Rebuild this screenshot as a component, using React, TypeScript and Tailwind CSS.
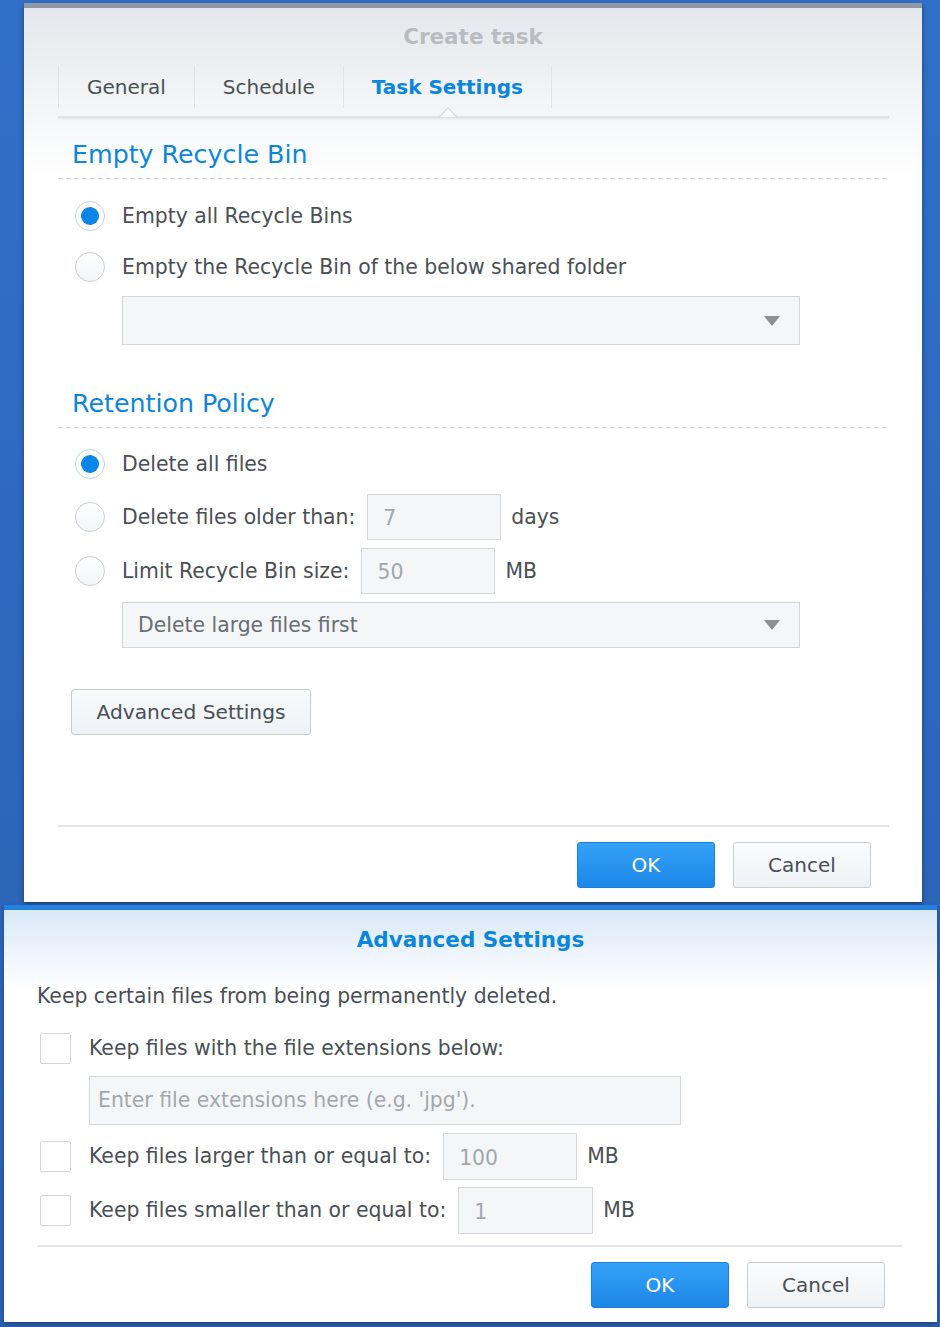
import React from "react";

function Radio({ checked, label }: { checked?: boolean; label: string }) {
  return (
    <div className="flex h-[34px] items-center">
      <span
        className={
          checked
            ? "ml-[17px] flex h-[30px] w-[30px] items-center justify-center rounded-full border-[1.5px] border-[#bfd0e0] bg-white"
            : "ml-[17px] h-[30px] w-[30px] rounded-full border-[1.5px] border-[#cbd0d5] bg-[linear-gradient(to_bottom,#ffffff,#f3f5f7)]"
        }
      >
        {checked && <span className="h-[18px] w-[18px] rounded-full bg-[#0a85e8]" />}
      </span>
      <span className="ml-[17px] text-[20.4px] text-[#4a4f55]">{label}</span>
    </div>
  );
}

function Checkbox() {
  return <span className="h-[31px] w-[31px] shrink-0 rounded-[2px] border border-[#d3d7db] bg-white" />;
}

function Field({ value, width }: { value: string; width: string }) {
  return (
    <div className={`${width} flex h-full items-center border border-[#d5d9dd] bg-[#f4f6f8] pl-[15px] pt-[3px] text-[20.4px] text-[#a2a7ad]`}>
      {value}
    </div>
  );
}

function Arrow() {
  return (
    <svg width="16" height="10" viewBox="0 0 16 10">
      <path d="M0 0 L16 0 L8 10 Z" fill="#8a8f96" />
    </svg>
  );
}

function SectionTitle({ children }: { children: React.ReactNode }) {
  return (
    <div>
      <div className="flex h-[34px] items-center pl-[14px] text-[25.3px] text-[#0b86de]">{children}</div>
      <div className="mt-[6px] h-px bg-[repeating-linear-gradient(to_right,#d2d6da_0_5px,transparent_5px_8px)]" />
    </div>
  );
}

function Buttons() {
  return (
    <div className="flex justify-end gap-[18px]">
      <button className="h-[46px] w-[138px] rounded-[3px] border border-[#1b80da] bg-[linear-gradient(to_bottom,#35a2f8,#1c86e6)] text-[20px] text-white">
        OK
      </button>
      <button className="h-[46px] w-[138px] rounded-[3px] border border-[#c8cdd2] bg-[linear-gradient(to_bottom,#fbfcfd,#eef1f4)] text-[20px] text-[#4a4f55]">
        Cancel
      </button>
    </div>
  );
}

export default function App() {
  return (
    <div className="h-[1327px] w-[940px] overflow-hidden bg-[linear-gradient(to_bottom,#3170c9,#2a5fb0)] pt-[3px] font-['DejaVu_Sans','Verdana',sans-serif]">
      {/* Create task dialog */}
      <div className="ml-[24px] flex h-[899px] w-[898px] flex-col border-t-[5px] border-[#8e99a5] bg-[linear-gradient(to_bottom,#e4e8ec_0px,#ffffff_170px)] shadow-[0_2px_5px_rgba(0,0,0,0.4)]">
        <div className="flex h-[58px] items-center justify-center text-[21.5px] font-bold text-[#b8bcc2]">Create task</div>

        <div className="flex flex-1 flex-col pl-[34px] pr-[33px]">
          <div className="flex h-[42px]">
            <div className="flex items-center border-l border-[#e1e4e7] px-[28px] text-[20px] text-[#4a4f55]">General</div>
            <div className="flex items-center border-l border-[#e1e4e7] px-[28px] text-[20px] text-[#4a4f55]">Schedule</div>
            <div className="flex items-center border-x border-[#e1e4e7] px-[28px] text-[20px] font-bold text-[#0b86de]">Task Settings</div>
          </div>
          <div className="relative mt-[8px] h-[2px] bg-[#dfe2e6] shadow-[0_1px_2px_rgba(0,0,0,0.08)]">
            <svg className="absolute left-[381px] top-[-9px]" width="18" height="11" viewBox="0 0 18 11">
              <path d="M0 10 L9 1 L18 10 Z" fill="#ffffff" />
              <path d="M0 10 L9 1 L18 10" fill="none" stroke="#d9dce0" strokeWidth="1.5" />
            </svg>
          </div>

          <div className="mt-[20px]">
            <SectionTitle>Empty Recycle Bin</SectionTitle>
          </div>
          <div className="mt-[20px] flex flex-col gap-[17px]">
            <Radio checked label="Empty all Recycle Bins" />
            <Radio label="Empty the Recycle Bin of the below shared folder" />
          </div>
          <div className="ml-[64px] mt-[12px] flex h-[49px] w-[678px] items-center justify-end border border-[#d3d7db] bg-[#f4f6f8] pr-[19px]">
            <Arrow />
          </div>

          <div className="mt-[42px]">
            <SectionTitle>Retention Policy</SectionTitle>
          </div>
          <div className="mt-[19px]">
            <Radio checked label="Delete all files" />
          </div>
          <div className="mt-[13px] flex h-[46px] items-center">
            <Radio label="Delete files older than:" />
            <div className="ml-[12px] h-[46px]">
              <Field value="7" width="w-[134px]" />
            </div>
            <span className="ml-[10px] text-[20.4px] text-[#4a4f55]">days</span>
          </div>
          <div className="mt-[8px] flex h-[46px] items-center">
            <Radio label="Limit Recycle Bin size:" />
            <div className="ml-[12px] h-[46px]">
              <Field value="50" width="w-[134px]" />
            </div>
            <span className="ml-[10px] text-[20.4px] text-[#4a4f55]">MB</span>
          </div>
          <div className="ml-[64px] mt-[8px] flex h-[46px] w-[678px] items-center justify-between border border-[#d3d7db] bg-[#f4f6f8] pl-[15px] pr-[19px]">
            <span className="text-[20.4px] text-[#686d73]">Delete large files first</span>
            <Arrow />
          </div>

          <button className="ml-[13px] mt-[41px] h-[46px] w-[240px] rounded-[3px] border border-[#c6ccd2] bg-[linear-gradient(to_bottom,#f8fafc,#eef2f6)] text-[20.2px] text-[#4a4f55]">
            Advanced Settings
          </button>

          <div className="flex-1" />
          <div className="h-[2px] bg-[#e3e5e8]" />
          <div className="pb-[14px] pr-[18px] pt-[15px]">
            <Buttons />
          </div>
        </div>
      </div>

      {/* Advanced Settings dialog */}
      <div className="ml-[4px] mt-[3px] flex h-[417px] w-[933px] flex-col border-t-[5px] border-[#2282e2] bg-[linear-gradient(to_bottom,#d9e8f7_0px,#ffffff_80px)] shadow-[0_2px_4px_rgba(0,0,0,0.3)]">
        <div className="flex h-[60px] items-center justify-center text-[21.5px] font-bold text-[#0b86de]">Advanced Settings</div>
        <div className="flex flex-1 flex-col pl-[33px] pr-[35px]">
          <div className="mt-[11px] flex h-[30px] items-center text-[20.4px] text-[#4a4f55]">
            Keep certain files from being permanently deleted.
          </div>
          <div className="ml-[3px] mt-[22px] flex h-[31px] items-center">
            <Checkbox />
            <span className="ml-[18px] text-[20.4px] text-[#4a4f55]">Keep files with the file extensions below:</span>
          </div>
          <div className="ml-[52px] mt-[12px] flex h-[49px] w-[592px] items-center border border-[#d5d9dd] bg-[#f4f6f8] pl-[8px] text-[20.4px] text-[#a2a7ad]">
            Enter file extensions here (e.g. 'jpg').
          </div>
          <div className="ml-[3px] mt-[8px] flex h-[47px] items-center">
            <Checkbox />
            <span className="ml-[18px] text-[20.4px] text-[#4a4f55]">Keep files larger than or equal to:</span>
            <div className="ml-[12px] h-[47px]">
              <Field value="100" width="w-[134px]" />
            </div>
            <span className="ml-[10px] text-[20.4px] text-[#4a4f55]">MB</span>
          </div>
          <div className="ml-[3px] mt-[7px] flex h-[47px] items-center">
            <Checkbox />
            <span className="ml-[18px] text-[20.4px] text-[#4a4f55]">Keep files smaller than or equal to:</span>
            <div className="ml-[12px] h-[47px]">
              <Field value="1" width="w-[135px]" />
            </div>
            <span className="ml-[10px] text-[20.4px] text-[#4a4f55]">MB</span>
          </div>
          <div className="mt-[11px] h-[2px] bg-[#e3e5e8]" />
          <div className="pr-[17px] pt-[15px]">
            <Buttons />
          </div>
        </div>
      </div>
    </div>
  );
}
